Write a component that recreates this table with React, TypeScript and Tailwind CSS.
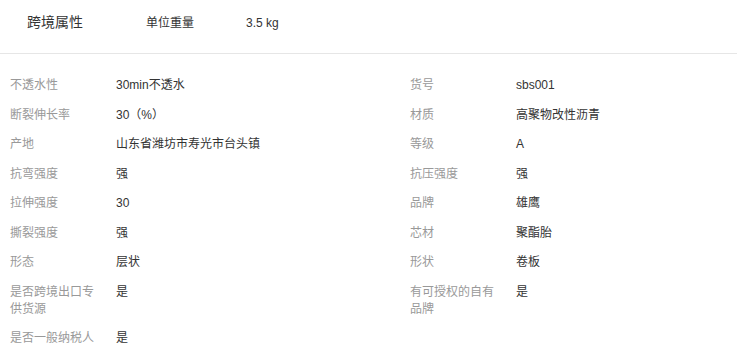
const rows: [string, string, string?, string?][] = [
  ["不透水性", "30min不透水", "货号", "sbs001"],
  ["断裂伸长率", "30（%）", "材质", "高聚物改性沥青"],
  ["产地", "山东省潍坊市寿光市台头镇", "等级", "A"],
  ["抗弯强度", "强", "抗压强度", "强"],
  ["拉伸强度", "30", "品牌", "雄鹰"],
  ["撕裂强度", "强", "芯材", "聚酯胎"],
  ["形态", "层状", "形状", "卷板"],
  ["是否跨境出口专供货源", "是", "有可授权的自有品牌", "是"],
  ["是否一般纳税人", "是"],
];

function Cell({ label, value }: { label?: string; value?: string }) {
  if (!label) return <div />;
  return (
    <div className="flex gap-[16px]">
      <div className="w-[90px] shrink-0 text-[#999]">{label}</div>
      <div className="text-[#333]">{value}</div>
    </div>
  );
}

export default function App() {
  return (
    <div
      className="w-[737px] h-[353px] overflow-hidden bg-white"
      style={{ fontFamily: '"Liberation Sans", "Noto Sans CJK SC", sans-serif' }}
    >
      {/* Header */}
      <div className="h-[53px] flex items-center pl-[27px] text-[#333] pb-[8px]">
        <span className="text-[14px] w-[119px]">跨境属性</span>
        <span className="text-[12px] w-[100px]">单位重量</span>
        <span className="text-[12px]">3.5 kg</span>
      </div>
      <div className="h-px bg-[#e6e6e6]" />

      {/* Attributes */}
      <div className="grid grid-cols-[400px_400px] gap-y-[12.5px] pl-[10px] pt-[23px] text-[12px] leading-[17px]">
        {rows.map(([l1, v1, l2, v2], i) => (
          <div key={i} className="contents">
            <Cell label={l1} value={v1} />
            <Cell label={l2} value={v2} />
          </div>
        ))}
      </div>
    </div>
  );
}
